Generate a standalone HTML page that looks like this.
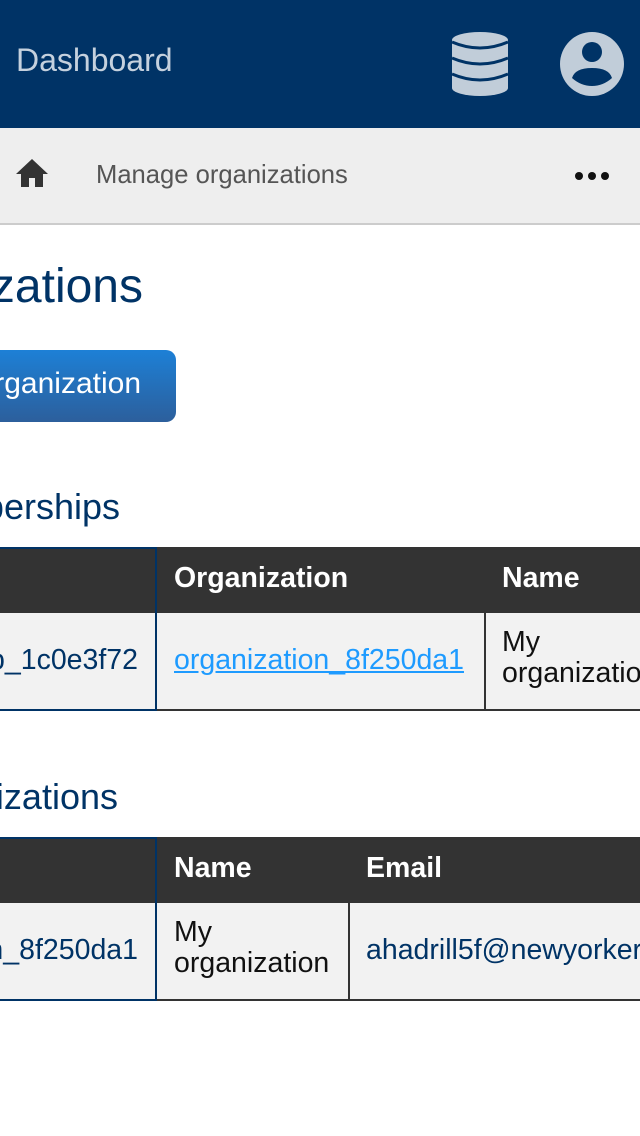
<!DOCTYPE html>
<html><head><meta charset="utf-8"><style>
*{margin:0;padding:0;box-sizing:border-box}
html,body{width:640px;height:1136px;overflow:hidden}
body{background:#fff;font-family:"Liberation Sans",sans-serif;position:relative}
#w{position:absolute;left:0;top:0;width:640px;height:1136px;overflow:hidden}
.a{position:absolute;white-space:nowrap}
.hdr{left:0;top:0;width:640px;height:128px;background:#003366}
.bc{left:0;top:128px;width:640px;height:97px;background:#eee;border-bottom:2px solid #ccc}
.td{background:#f2f2f2}
.t{font-size:28.5px}
</style></head><body><div id="w">
<div class="a hdr"></div>
<div class="a" style="left:16px;top:42px;font-size:32px;color:#c5d1de">Dashboard</div>
<svg class="a" style="left:451px;top:32px" width="58" height="64" viewBox="0 0 58 64">
<ellipse cx="29" cy="8" rx="28" ry="8" fill="#c1cdd9"/>
<rect x="1" y="8" width="56" height="48" fill="#c1cdd9"/>
<ellipse cx="29" cy="56" rx="28" ry="8" fill="#c1cdd9"/>
<path d="M1 10 Q29 22 57 10 M1 26 Q29 38 57 26 M1 42 Q29 54 57 42" stroke="#003366" stroke-width="3" fill="none"/>
</svg>
<svg class="a" style="left:559px;top:32px" width="66" height="64" viewBox="0 0 66 64">
<ellipse cx="33" cy="32" rx="32" ry="32" fill="#c1cdd9"/>
<circle cx="33" cy="20" r="10" fill="#003366"/>
<path d="M13 46 Q16 36 33 36 Q50 36 53 46 Q44 54 33 54 Q22 54 13 46Z" fill="#003366"/>
</svg>
<div class="a bc"></div>
<svg class="a" style="left:16px;top:159px" width="32" height="28" viewBox="0 0 32 28"><path d="M16 0 L32 15 H27 V28 H19 V19 H13 V28 H5 V15 H0Z" fill="#333"/></svg>
<div class="a" style="left:96px;top:161px;font-size:25.6px;color:#555">Manage organizations</div>
<div class="a" style="left:575px;top:172px;width:8px;height:8px;border-radius:50%;background:#111"></div>
<div class="a" style="left:588px;top:172px;width:8px;height:8px;border-radius:50%;background:#111"></div>
<div class="a" style="left:601px;top:172px;width:8px;height:8px;border-radius:50%;background:#111"></div>
<div class="a" style="right:497px;top:259px;font-size:48px;color:#003366">Organizations</div>
<div class="a" style="left:-200px;top:350px;width:376px;height:72px;border-radius:0 10px 10px 0;background:linear-gradient(#1d80d6,#2c5f9c)"></div>
<div class="a" style="right:499px;top:367px;font-size:30px;color:#fff">Create organization</div>
<div class="a" style="right:520px;top:486px;font-size:36px;color:#003366">Memberships</div>
<div class="a" style="left:0;top:547px;width:640px;height:66px;background:#333"></div>
<div class="a td" style="left:0;top:613px;width:640px;height:97px"></div>
<div class="a" style="left:0;top:547px;width:157px;height:164px;border-right:2px solid #003366;border-top:2px solid #003366;border-bottom:2px solid #003366"></div>
<div class="a" style="left:484px;top:613px;width:2px;height:98px;background:#333"></div>
<div class="a" style="left:157px;top:709px;width:483px;height:2px;background:#333"></div>
<div class="a t" style="left:174px;top:562px;font-weight:bold;color:#fff">Organization</div>
<div class="a t" style="left:502px;top:562px;font-weight:bold;color:#fff">Name</div>
<div class="a t" style="right:502px;top:644px;color:#003366">group_1c0e3f72</div>
<div class="a t" style="left:174px;top:644px;color:#1e9bff;text-decoration:underline">organization_8f250da1</div>
<div class="a t" style="left:502px;top:627px;line-height:31px;color:#111">My<br>organization</div>
<div class="a" style="right:522px;top:776px;font-size:36px;color:#003366">Organizations</div>
<div class="a" style="left:0;top:837px;width:640px;height:66px;background:#333"></div>
<div class="a td" style="left:0;top:903px;width:640px;height:97px"></div>
<div class="a" style="left:0;top:837px;width:157px;height:164px;border-right:2px solid #003366;border-top:2px solid #003366;border-bottom:2px solid #003366"></div>
<div class="a" style="left:348px;top:903px;width:2px;height:98px;background:#333"></div>
<div class="a" style="left:157px;top:999px;width:483px;height:2px;background:#333"></div>
<div class="a t" style="left:174px;top:852px;font-weight:bold;color:#fff">Name</div>
<div class="a t" style="left:366px;top:852px;font-weight:bold;color:#fff">Email</div>
<div class="a t" style="right:502px;top:934px;color:#003366">organization_8f250da1</div>
<div class="a t" style="left:174px;top:917px;line-height:31px;color:#111">My<br>organization</div>
<div class="a t" style="left:366px;top:934px;color:#003366">ahadrill5f@newyorker.com</div>
</div></body></html>
